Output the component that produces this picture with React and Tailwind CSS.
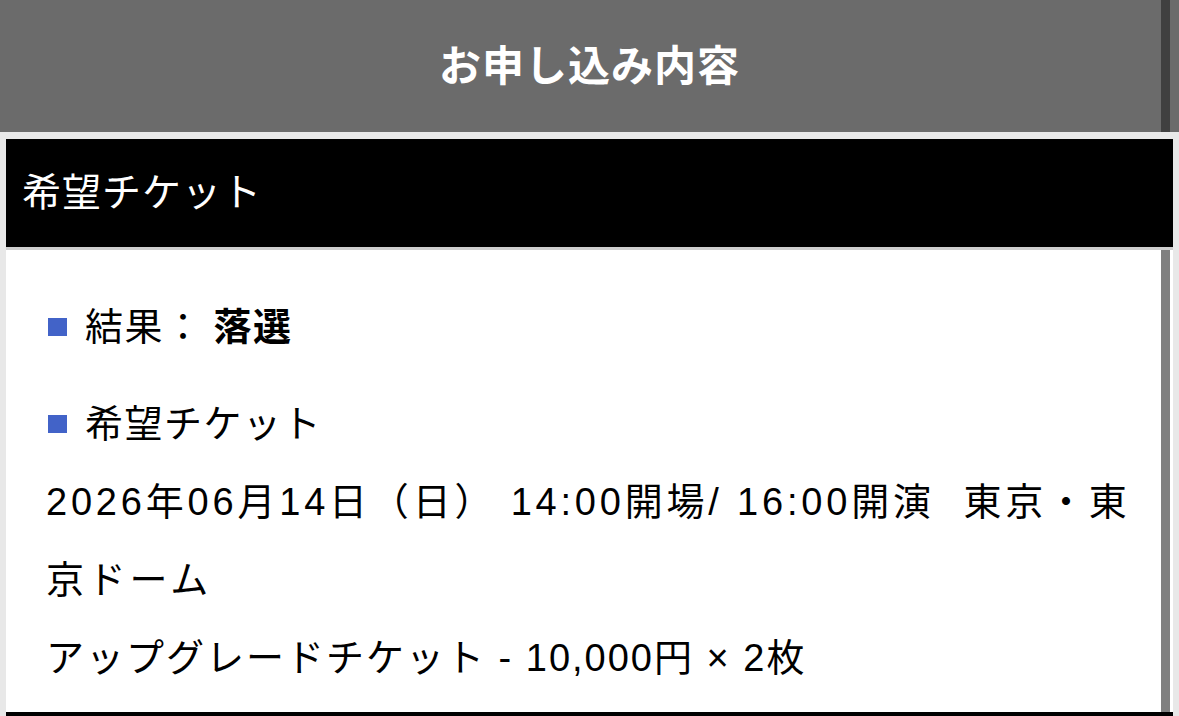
import React from 'react'

const Bullet = ({ children }) => (
  <div className="flex items-center">
    <span className="inline-block w-[19px] h-[18px] bg-[#4263c8] ml-[2px] mr-[18px]" />
    <span>{children}</span>
  </div>
)

const App = () => {
  return (
    <div className="relative h-[716px] overflow-hidden bg-[#e8e8e8] font-['Liberation_Sans','Noto_Sans_CJK_JP',sans-serif] text-black">
      <header className="h-[132px] bg-[#6b6b6b] flex items-center justify-center text-white font-bold text-[42px] tracking-[1px]">
        お申し込み内容
      </header>

      <div className="mx-[6px] mt-[7px]">
        <div className="box-border h-[111px] bg-black border-b-[3px] border-[#cfcfcf] flex items-center pl-4 text-white text-[39px] tracking-[1px]">
          希望チケット
        </div>

        <div className="h-[462px] bg-white pl-[40px] pr-[30px] pt-[38px] text-[38px] leading-[78px] tracking-[1.5px]">
          <Bullet>
            結果：<span className="font-bold ml-[10px]">落選</span>
          </Bullet>
          <div className="mt-[19px]">
            <Bullet>希望チケット</Bullet>
          </div>
          <p className="tracking-[3.8px]">2026年06月14日（日） 14:00開場/ 16:00開演{'\u00a0'} 東京・東京ドーム</p>
          <p className="tracking-[2px]">アップグレードチケット - 10,000円 × 2枚</p>
        </div>

        <div className="h-10 bg-black" />
      </div>

      {/* scrollbar thumb */}
      <div className="absolute left-[1161px] top-0 w-[9px] h-[132px] bg-[#404040]" />
      <div className="absolute left-[1161px] top-[250px] w-[9px] h-[462px] bg-[#808080]" />
    </div>
  )
}

export default App
